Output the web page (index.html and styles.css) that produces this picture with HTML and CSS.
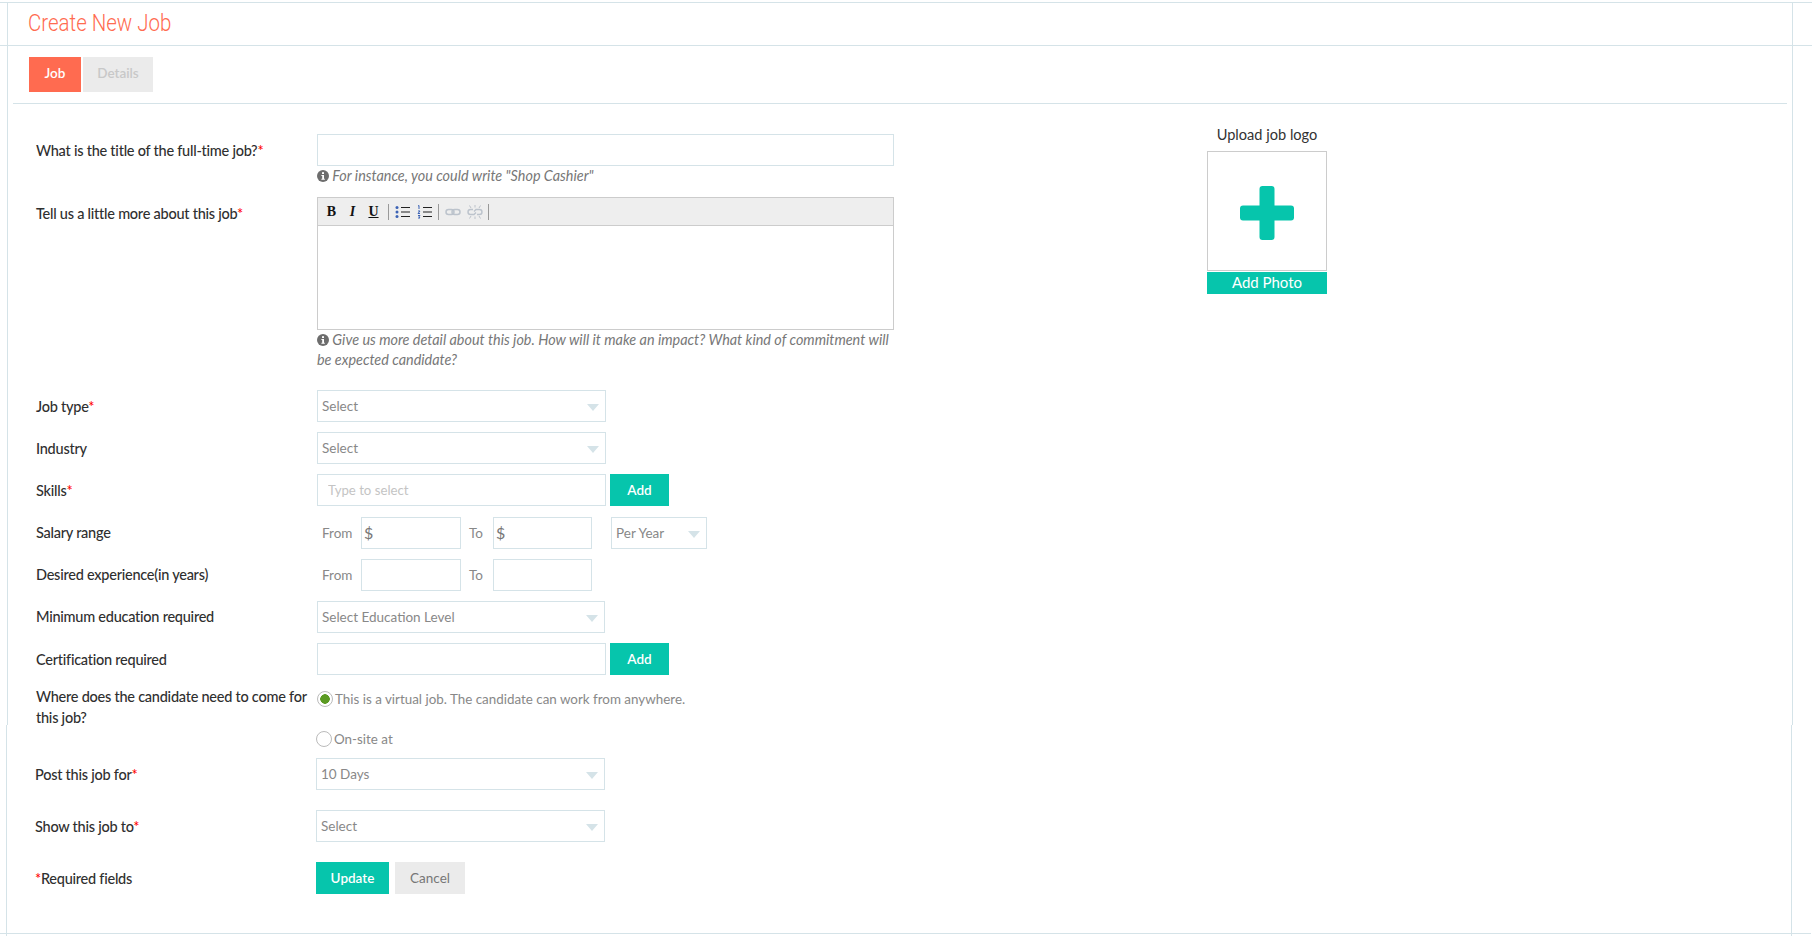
FILE: index.html
```html
<!DOCTYPE html>
<html lang="en">
<head>
    <meta charset="UTF-8">
    <title>Create New Job</title>
    <link rel="stylesheet" href="styles.css">
</head>
<body>
    <div class="upper">
        <div class="page-head">
            <h1>Create New Job</h1>
        </div>
        <div class="tabs">
            <a href="#" class="tab tab-active">Job</a>
            <a href="#" class="tab tab-details">Details</a>
        </div>
        <div class="columns">
            <form class="form">
                <div class="row row-top row-title">
                    <label class="lbl">What is the title of the full-time job?<span class="req">*</span></label>
                    <div class="field">
                        <input type="text" class="inp inp-wide">
                        <p class="hint"><svg class="info" viewBox="0 0 12 12"><circle cx="6" cy="6" r="6"/><rect x="5" y="2.2" width="2" height="1.8" fill="#fff"/><path d="M4.4 5h2.6v3.8h.8v1H4.4v-1h.8V6h-.8z" fill="#fff"/></svg> For instance, you could write "Shop Cashier"</p>
                    </div>
                </div>
                <div class="row row-top row-editor">
                    <label class="lbl">Tell us a little more about this job<span class="req">*</span></label>
                    <div class="field">
                        <div class="editor">
                            <div class="toolbar">
                                <span class="tool tool-b">B</span>
                                <span class="tool tool-i">I</span>
                                <span class="tool tool-u">U</span>
                                <span class="sep"></span>
                                <svg class="ico" viewBox="0 0 16 14"><g fill="#3b62b5"><circle cx="2" cy="2.5" r="1.5"/><circle cx="2" cy="7" r="1.5"/><circle cx="2" cy="11.5" r="1.5"/></g><path d="M6 2.5h9M6 7h9M6 11.5h9" stroke="#222" stroke-width="1"/></svg>
                                <svg class="ico" viewBox="0 0 16 14"><path d="M1 1l1-.5V4M1 6h2L1 8.500h2M1 10.500h2L2 11.800l1 1.200H1" stroke="#3b62b5" stroke-width="1" fill="none"/><path d="M6 2.500h9M6 7h9M6 11.500h9" stroke="#222" stroke-width="1"/></svg>
                                <span class="sep"></span>
                                <svg class="ico" viewBox="0 0 16 14"><g fill="none" stroke="#bcc3cc" stroke-width="1.500"><rect x="1" y="4.500" width="8" height="5" rx="2.500"/><rect x="7" y="4.500" width="8" height="5" rx="2.500"/></g></svg>
                                <svg class="ico" viewBox="0 0 16 14"><g fill="none" stroke="#bcc3cc" stroke-width="1.400"><path d="M6 4.500H3.500a2.500 2.500 0 0 0 0 5H7l2-2"/><path d="M10 9.500h2.500a2.500 2.500 0 0 0 0-5H9l-2 2"/></g><path d="M4 3L2.500 0.500M8 2.500V0M12 3l1.500-2.500M4 11l-1.500 2.500M8 11.500V14M12 11l1.500 2.500" stroke="#b5bcc5" stroke-width=".9"/></svg>
                                <span class="sep"></span>
                            </div>
                            <div class="editor-body"></div>
                        </div>
                        <p class="hint hint-wrap"><svg class="info" viewBox="0 0 12 12"><circle cx="6" cy="6" r="6"/><rect x="5" y="2.2" width="2" height="1.8" fill="#fff"/><path d="M4.4 5h2.600v3.800h.8v1H4.400v-1h.8V6h-.8z" fill="#fff"/></svg> Give us more detail about this job. How will it make an impact? What kind of commitment will be expected candidate?</p>
                    </div>
                </div>
                <div class="row">
                    <label class="lbl">Job type<span class="req">*</span></label>
                    <div class="select"><select><option>Select</option></select></div>
                </div>
                <div class="row">
                    <label class="lbl">Industry</label>
                    <div class="select"><select><option>Select</option></select></div>
                </div>
                <div class="row">
                    <label class="lbl">Skills<span class="req">*</span></label>
                    <input type="text" class="inp inp-mid inp-pad" placeholder="Type to select">
                    <button type="button" class="btn btn-add">Add</button>
                </div>
                <div class="row">
                    <label class="lbl">Salary range</label>
                    <div class="range">
                        <span class="from">From</span>
                        <div class="money"><input type="text" class="inp inp-from inp-money"><span class="dollar">$</span></div>
                        <span class="to">To</span>
                        <div class="money"><input type="text" class="inp inp-to inp-money"><span class="dollar">$</span></div>
                        <div class="select select-small"><select><option>Per Year</option></select></div>
                    </div>
                </div>
                <div class="row">
                    <label class="lbl">Desired experience(in years)</label>
                    <div class="range">
                        <span class="from">From</span>
                        <input type="text" class="inp inp-from">
                        <span class="to">To</span>
                        <input type="text" class="inp inp-to">
                    </div>
                </div>
                <div class="row">
                    <label class="lbl">Minimum education required</label>
                    <div class="select select-edu"><select><option>Select Education Level</option></select></div>
                </div>
                <div class="row">
                    <label class="lbl">Certification required</label>
                    <input type="text" class="inp inp-mid">
                    <button type="button" class="btn btn-add">Add</button>
                </div>
                <div class="row row-top row-where">
                    <label class="lbl lbl-where">Where does the candidate need to come for this job?</label>
                    <div class="radio-line"><span class="radio radio-on"></span>This is a virtual job. The candidate can work from anywhere.</div>
                </div>
            </form>
            <aside class="upload">
                <div class="upload-title">Upload job logo</div>
                <div class="upload-box">
                    <svg class="plus" viewBox="0 0 54 54"><path d="M19.500 3a3 3 0 0 1 3-3h9a3 3 0 0 1 3 3v16.500H51a3 3 0 0 1 3 3v9a3 3 0 0 1-3 3H34.500V51a3 3 0 0 1-3 3h-9a3 3 0 0 1-3-3V34.500H3a3 3 0 0 1-3-3v-9a3 3 0 0 1 3-3h16.500z"/></svg>
                </div>
                <div class="upload-bar">Add Photo</div>
            </aside>
        </div>
    </div>
    <div class="lower">
        <div class="radio-row"><span class="radio"></span>On-site at</div>
        <div class="row row-post">
            <label class="lbl">Post this job for<span class="req">*</span></label>
            <div class="select"><select><option>10 Days</option></select></div>
        </div>
        <div class="row row-post">
            <label class="lbl">Show this job to<span class="req">*</span></label>
            <div class="select"><select><option>Select</option></select></div>
        </div>
        <div class="row">
            <label class="lbl"><span class="req">*</span>Required fields</label>
            <button type="button" class="btn btn-update">Update</button>
            <button type="button" class="btn btn-cancel">Cancel</button>
        </div>
        <div class="page-foot"></div>
    </div>
</body>
</html>
```

FILE: styles.css
```css
* {
    box-sizing: border-box;
}
body {
    margin: 0;
    background: #fff;
    color: #333;
    font-family: "Lato", "Noto Sans", sans-serif;
    font-size: 14px;
    overflow: hidden;
}
.upper {
    height: 723px;
    margin: 0 19px 0 7px;
    border-left: 1px solid #d5e3e8;
    border-right: 1px solid #d5e3e8;
}
.lower {
    height: 213px;
    margin: 0 20px 0 6px;
    border-left: 1px solid #d5e3e8;
    border-right: 1px solid #d5e3e8;
    padding-left: 28px;
}
.page-head {
    margin: 2px -20px 0 -8px;
    height: 44px;
    padding-left: 28px;
    border-top: 1px solid #d5e3e8;
    border-bottom: 1px solid #d5e3e8;
}
h1 {
    margin: 0;
    font-family: "Roboto", sans-serif;
    font-weight: 300;
    font-size: 23px;
    line-height: 41px;
    color: #ff6b50;
    transform: scaleX(0.89);
    transform-origin: left center;
}
.tabs {
    display: flex;
    gap: 2px;
    margin: 11px 5px 0 5px;
    padding: 0 0 11px 16px;
    border-bottom: 1px solid #d5e3e8;
}
.tab {
    width: 52px;
    height: 35px;
    line-height: 32px;
    background: #ebebeb;
    color: #c8c8c8;
    font-size: 13.5px;
    font-weight: 600;
    text-align: center;
    text-decoration: none;
}
.tab-active {
    background: #ff6b50;
    color: #fff;
}
.tab-details {
    width: 70px;
}
.columns {
    display: flex;
}
.form {
    width: 887px;
    padding: 30px 0 0 28px;
}
.row {
    display: flex;
    align-items: center;
    height: 32px;
    margin-bottom: 10.2px;
}
.row-top {
    height: auto;
    align-items: flex-start;
}
.row-title {
    margin-bottom: 11px;
}
.row-editor {
    margin-bottom: 20px;
}
.row-where {
    margin: 0;
}
.lbl {
    flex: none;
    width: 281px;
    font-size: 14.5px;
    font-weight: 500;
    letter-spacing: -0.25px;
    color: #2f2f2f;
}
.row-top .lbl {
    padding-top: 8px;
}
.row-top .lbl-where {
    padding-top: 0;
    line-height: 21px;
    margin-top: 1px;
}
.req {
    color: #f00;
}
.field {
    width: 577px;
}
.inp {
    height: 32px;
    border: 1px solid #d5e3e8;
    background: #fff;
    font: inherit;
    font-size: 13.2px;
    color: #888;
    outline: none;
    padding: 0 4px;
}
.inp-wide {
    display: block;
    width: 577px;
}
.inp-mid {
    width: 289px;
}
.inp-pad {
    padding-left: 10px;
}
.inp-pad::placeholder {
    color: #c4c4c4;
}
.hint {
    margin: 0;
    font-style: italic;
    font-size: 14.4px;
    line-height: 20px;
    color: #777;
}
.info {
    width: 12px;
    height: 12px;
    fill: #6d6d6d;
    vertical-align: -1px;
}
.editor {
    height: 133px;
    border: 1px solid #ccc;
}
.toolbar {
    display: flex;
    align-items: center;
    height: 28px;
    padding-left: 3px;
    background: #eee;
    border-bottom: 1px solid #ccc;
}
.tool {
    width: 21px;
    font-family: "Liberation Serif", serif;
    font-size: 14px;
    font-weight: 700;
    color: #111;
    text-align: center;
}
.tool-i {
    font-style: italic;
}
.tool-u {
    margin-right: 2px;
    text-decoration: underline;
}
.ico {
    width: 16px;
    height: 14px;
    margin: 0 3px;
}
.sep {
    width: 1px;
    height: 16px;
    margin: 0 3px 0 2px;
    background: #999;
}
.select {
    position: relative;
    width: 289px;
    height: 32px;
}
.select select {
    width: 100%;
    height: 100%;
    padding: 0 4px;
    border: 1px solid #d5e3e8;
    border-radius: 0;
    background: #fff;
    font: inherit;
    font-size: 13.5px;
    color: #888;
    appearance: none;
    outline: none;
}
.select::after {
    content: "";
    position: absolute;
    right: 7px;
    top: 14px;
    border-left: 6px solid transparent;
    border-right: 6px solid transparent;
    border-top: 7px solid #d5e3e8;
}
.select-edu {
    width: 288px;
}
.select-small {
    width: 96px;
    margin-left: 19px;
}
.range {
    display: flex;
    align-items: center;
    font-size: 13.5px;
    color: #888;
}
.from {
    width: 44px;
    padding-left: 5px;
}
.to {
    width: 32px;
    padding-left: 8px;
}
.inp-from {
    width: 100px;
}
.inp-to {
    width: 99px;
}
.money {
    position: relative;
    display: flex;
}
.inp-money {
    padding-left: 18px;
}
.dollar {
    position: absolute;
    left: 3px;
    top: 6px;
    font-size: 16px;
    color: #777;
}
.btn {
    height: 32px;
    border: 0;
    font: inherit;
    font-size: 13.5px;
    cursor: pointer;
}
.btn-add {
    width: 59px;
    margin-left: 4px;
    background: #06c5ac;
    color: #fff;
    font-weight: 600;
}
.btn-update {
    width: 73px;
    background: #06c5ac;
    color: #fff;
    font-weight: 600;
}
.btn-cancel {
    width: 70px;
    margin-left: 6px;
    background: #ebebeb;
    color: #777;
}
.radio-line, .radio-row {
    display: flex;
    align-items: center;
    font-size: 13.4px;
    color: #888;
}
.radio-line {
    margin-top: 6px;
}
.radio-row {
    height: 28px;
    margin: 0 0 5px 281px;
}
.radio {
    flex: none;
    width: 16px;
    height: 16px;
    margin-right: 2px;
    border: 1px solid #bbb;
    border-radius: 50%;
    background: #fff;
}
.radio-on {
    background: radial-gradient(circle, #5b9a22 0 4.5px, #fff 5px);
}
.row-post {
    margin-bottom: 20px;
}
.page-foot {
    margin: 39px -20px 0 -35px;
    border-bottom: 1px solid #d5e3e8;
}
.upload {
    width: 120px;
    margin-left: 312px;
    padding-top: 22px;
}
.upload-title {
    margin-bottom: 8px;
    font-size: 14.6px;
    text-align: center;
    white-space: nowrap;
}
.upload-box {
    display: flex;
    align-items: center;
    justify-content: center;
    height: 120px;
    border: 1px solid #ccc;
}
.plus {
    width: 54px;
    height: 54px;
    margin-top: 3px;
    fill: #06c5ac;
}
.upload-bar {
    height: 22px;
    margin-top: 1px;
    background: #06c5ac;
    color: #fff;
    font-size: 15px;
    line-height: 21px;
    text-align: center;
}
```
